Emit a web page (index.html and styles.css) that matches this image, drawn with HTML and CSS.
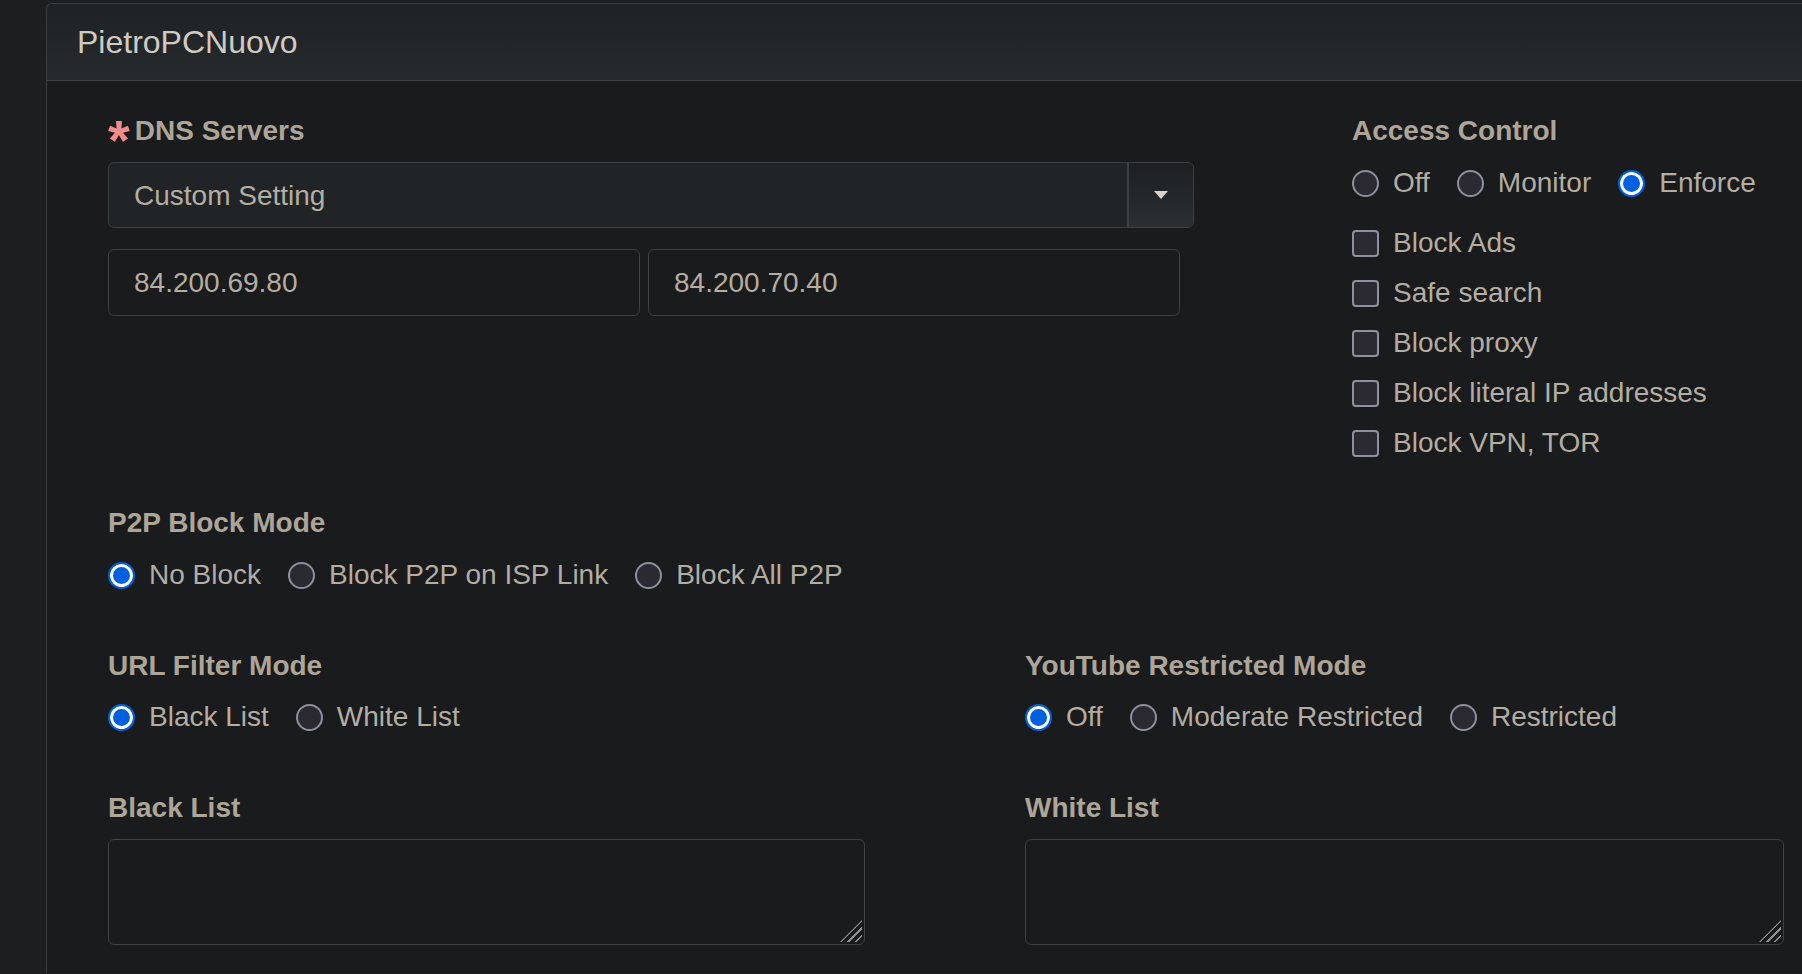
FILE: index.html
```html
<!DOCTYPE html>
<html lang="en">
<head>
    <meta charset="UTF-8">
    <meta name="viewport" content="width=device-width, initial-scale=1.0">
    <title>PietroPCNuovo</title>
    <link rel="stylesheet" href="styles.css">
</head>
<body>
    <div class="page">
        <div class="panel">
            <div class="panel-heading">PietroPCNuovo</div>
            <div class="panel-body">
                <div class="top-row">
                    <div class="dns">
                        <div class="field-label"><span class="req">*</span>DNS Servers</div>
                        <div class="select-group">
                            <select class="select-box">
                                <option>Custom Setting</option>
                            </select>
                            <span class="select-btn"><span class="caret"></span></span>
                        </div>
                        <div class="dns-inputs">
                            <input type="text" class="text-input" value="84.200.69.80">
                            <input type="text" class="text-input" value="84.200.70.40">
                        </div>
                    </div>
                    <div class="access">
                        <div class="field-label">Access Control</div>
                        <div class="radios">
                            <label class="opt"><input type="radio" name="access"> Off</label>
                            <label class="opt"><input type="radio" name="access"> Monitor</label>
                            <label class="opt"><input type="radio" name="access" checked> Enforce</label>
                        </div>
                        <div class="checks">
                            <label class="opt"><input type="checkbox"> Block Ads</label>
                            <label class="opt"><input type="checkbox"> Safe search</label>
                            <label class="opt"><input type="checkbox"> Block proxy</label>
                            <label class="opt"><input type="checkbox"> Block literal IP addresses</label>
                            <label class="opt"><input type="checkbox"> Block VPN, TOR</label>
                        </div>
                    </div>
                </div>

                <div class="section">
                    <div class="field-label">P2P Block Mode</div>
                    <div class="radios">
                        <label class="opt"><input type="radio" name="p2p" checked> No Block</label>
                        <label class="opt"><input type="radio" name="p2p"> Block P2P on ISP Link</label>
                        <label class="opt"><input type="radio" name="p2p"> Block All P2P</label>
                    </div>
                </div>

                <div class="two-col section">
                    <div>
                        <div class="field-label">URL Filter Mode</div>
                        <div class="radios">
                            <label class="opt"><input type="radio" name="url" checked> Black List</label>
                            <label class="opt"><input type="radio" name="url"> White List</label>
                        </div>
                    </div>
                    <div>
                        <div class="field-label">YouTube Restricted Mode</div>
                        <div class="radios">
                            <label class="opt"><input type="radio" name="yt" checked> Off</label>
                            <label class="opt"><input type="radio" name="yt"> Moderate Restricted</label>
                            <label class="opt"><input type="radio" name="yt"> Restricted</label>
                        </div>
                    </div>
                </div>

                <div class="two-col">
                    <div>
                        <div class="field-label">Black List</div>
                        <div class="list-wrap">
                            <textarea class="list-box"></textarea>
                            <span class="grip"></span>
                        </div>
                    </div>
                    <div>
                        <div class="field-label">White List</div>
                        <div class="list-wrap">
                            <textarea class="list-box"></textarea>
                            <span class="grip"></span>
                        </div>
                    </div>
                </div>
            </div>
        </div>
    </div>
</body>
</html>
```

FILE: styles.css
```css
html {
    color-scheme: dark;
}
body {
    margin: 0;
    background: #1c1e20;
    font-family: "Liberation Sans", Arial, sans-serif;
    font-size: 28px;
    color: #b3ada2;
}
.page {
    padding: 3px 0 0 46px;
}
.panel {
    background: #1a1b1d;
    border: 1px solid #3b3e41;
    border-right: none;
    border-bottom: none;
    border-radius: 6px 0 0 0;
    height: 970px;
    box-sizing: border-box;
}
.panel-heading {
    height: 76px;
    padding-left: 30px;
    display: flex;
    align-items: center;
    font-size: 32px;
    color: #cfcbc3;
    background: linear-gradient(#1f2225, #272a2d);
    border-bottom: 1px solid #3f4245;
    border-radius: 6px 0 0 0;
}
.panel-body {
    padding: 30px 0 0 61px;
}
.field-label {
    font-weight: bold;
    line-height: 40px;
    height: 40px;
    color: #aca598;
    margin-bottom: 12px;
    white-space: nowrap;
}
.req {
    font-size: 56px;
    line-height: 0;
    vertical-align: -19px;
    color: #f28b8b;
    margin-right: 5px;
}
.top-row {
    display: flex;
    align-items: flex-start;
    margin-bottom: 40px;
}
.dns {
    width: 1086px;
}
.dns .field-label {
    margin-bottom: 11px;
}
.select-group {
    display: flex;
    height: 66px;
    border: 1px solid #3b4043;
    border-radius: 6px;
    background: #212427;
    box-sizing: border-box;
    overflow: hidden;
}
.select-box {
    flex: 1;
    appearance: none;
    border: none;
    background: transparent;
    font: inherit;
    color: #b3ada2;
    padding: 0 25px;
    outline: none;
}
.select-btn {
    width: 64px;
    border-left: 2px solid #3b4043;
    background: linear-gradient(#1d1f22, #2b2f32);
    display: flex;
    align-items: center;
    justify-content: center;
}
.caret {
    width: 0;
    height: 0;
    border-top: 8px solid #d8d4cc;
    border-left: 7px solid transparent;
    border-right: 7px solid transparent;
}
.dns-inputs {
    display: flex;
    gap: 8px;
    margin-top: 21px;
}
.text-input {
    width: 532px;
    height: 67px;
    box-sizing: border-box;
    padding: 0 25px;
    font: inherit;
    color: #b3ada2;
    background: #1a1b1d;
    border: 1px solid #3b4043;
    border-radius: 6px;
    outline: none;
}
.access {
    margin-left: 158px;
}
.radios {
    display: flex;
    align-items: center;
    height: 40px;
}
.checks {
    display: flex;
    flex-direction: column;
    gap: 10px;
    margin-top: 20px;
}
.opt {
    display: inline-flex;
    align-items: center;
    height: 40px;
    margin-right: 27px;
    white-space: nowrap;
}
.opt input {
    appearance: none;
    width: 27px;
    height: 27px;
    margin: 0 14px 0 0;
    box-sizing: border-box;
    border: 2px solid #8f8f9d;
    background: #2b2a33;
    flex-shrink: 0;
}
.opt input[type="radio"] {
    border-radius: 50%;
}
.opt input[type="checkbox"] {
    border-radius: 4px;
}
.opt input[type="radio"]:checked {
    border: 2px solid #0060df;
    background: #0060df;
    box-shadow: inset 0 0 0 3px #fff;
}
.section {
    margin-bottom: 51px;
}
.two-col {
    display: grid;
    grid-template-columns: 757px 759px;
    column-gap: 160px;
}
.two-col .field-label {
    margin-bottom: 11px;
}
.list-wrap {
    position: relative;
}
.list-box {
    display: block;
    width: 100%;
    height: 106px;
    box-sizing: border-box;
    background: #1a1b1d;
    border: 1px solid #3d4244;
    border-radius: 6px;
    font: inherit;
    color: #b3ada2;
    outline: none;
    resize: none;
}
.grip {
    position: absolute;
    right: 3px;
    bottom: 3px;
    width: 22px;
    height: 22px;
    background: repeating-linear-gradient(135deg, transparent 0 4px, #8d9194 4px 5.5px);
    clip-path: polygon(100% 0, 100% 100%, 0 100%);
}
```
